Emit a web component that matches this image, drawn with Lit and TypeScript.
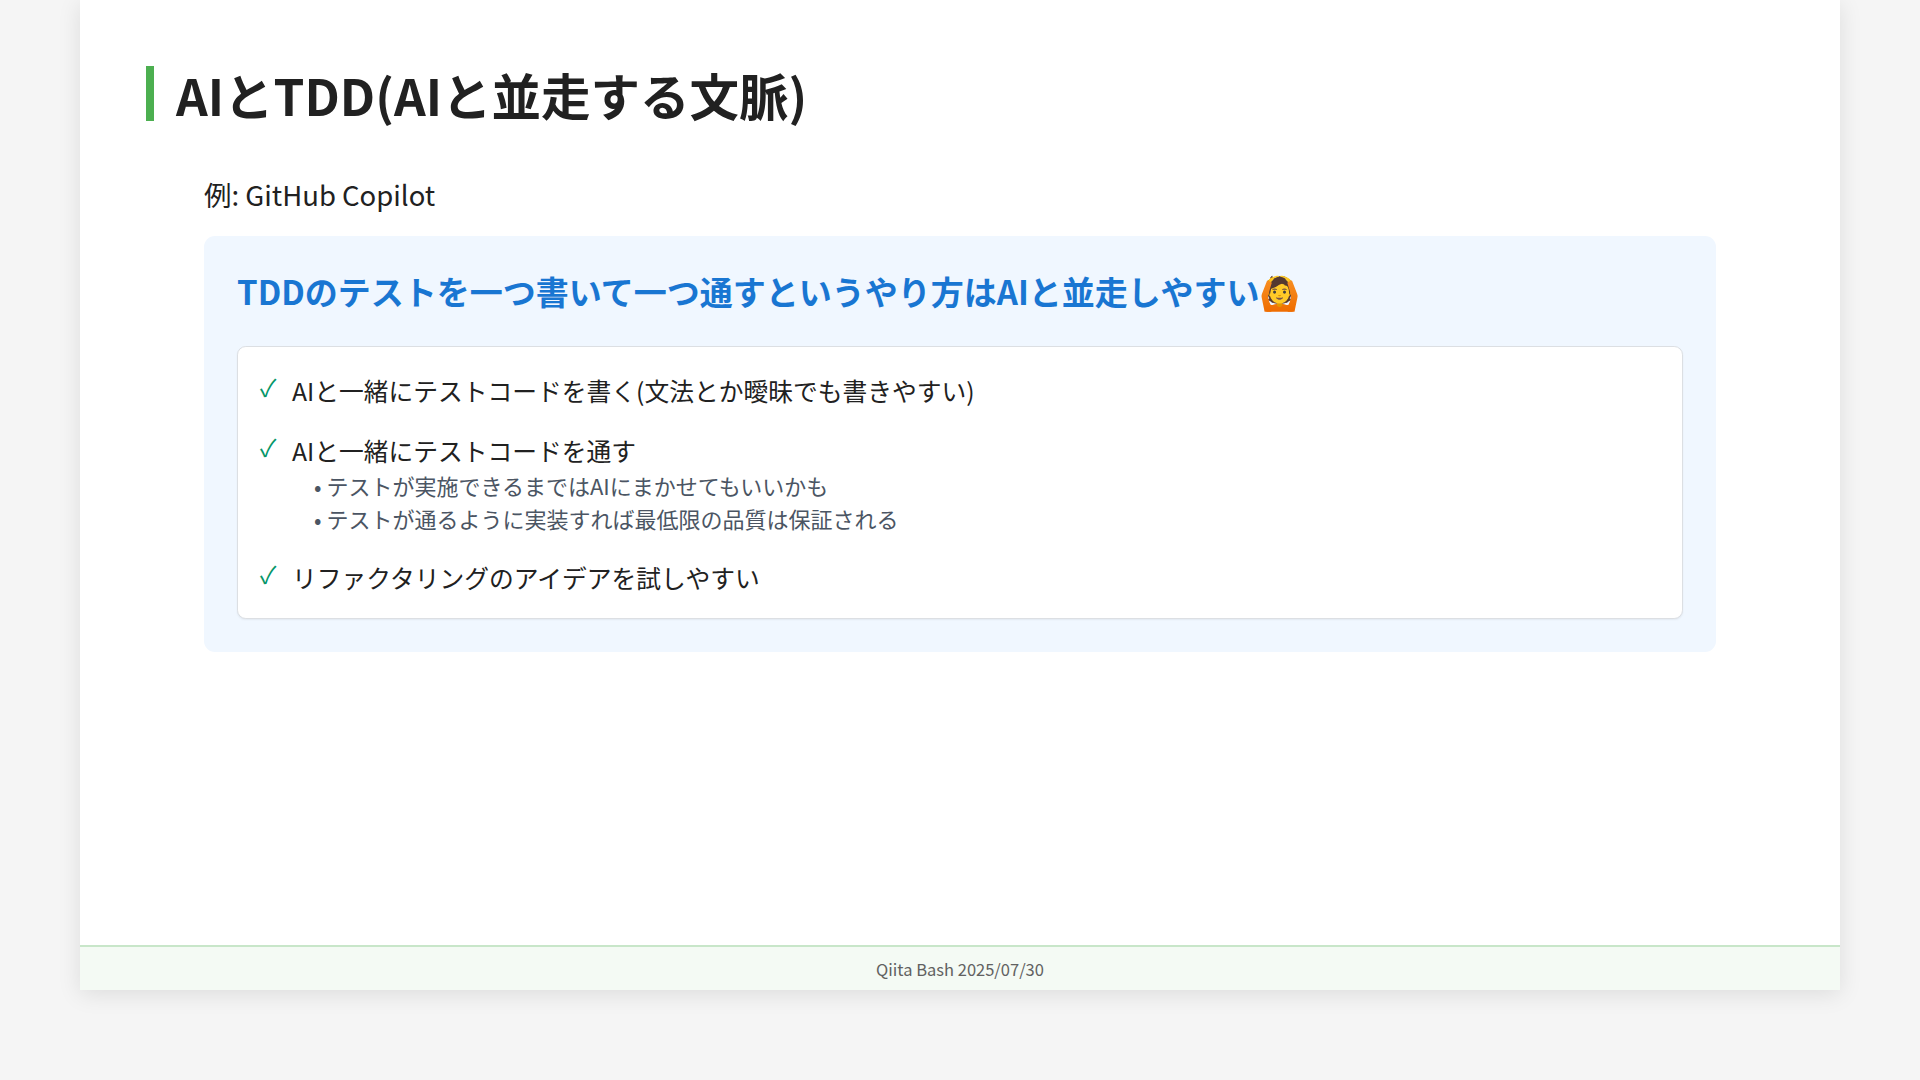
import { LitElement, html, css } from "lit";
import { customElement } from "lit/decorators.js";

@customElement("app-root")
export class AppRoot extends LitElement {
  static styles = css`
    :host { display: block; min-height: 1080px; background: #f5f5f5; font-family: "Noto Sans CJK JP", "Noto Sans", sans-serif; color: #212121; }
    .slide { width: 1760px; height: 990px; margin: 0 auto; background: #fff; box-shadow: 0 4px 22px rgba(0,0,0,.1); display: flex; flex-direction: column; }
    .main { flex: 1; padding: 66px 124px 0 66px; }
    h2 { margin: 0; padding: 2px 0 0 22px; font-size: 49.5px; line-height: 53px; font-weight: 700; border-left: 8.8px solid #4caf50; }
    .body { margin-left: 58px; }
    .lead { margin: 53px 0 0; font-size: 27.5px; line-height: 40px; }
    .card { margin-top: 22px; background: #f0f7ff; border-radius: 11px; padding: 33px; }
    h3 { margin: 0 0 33px; font-size: 33px; line-height: 44px; font-weight: 700; color: #1976d2; }
    .box { background: #fff; border: 1px solid #dcdfe3; border-radius: 8.8px; padding: 24px 21px 22px 20px; box-shadow: 0 1px 2px rgba(0,0,0,.06); }
    .item { display: flex; }
    .item + .item { margin-top: 22px; }
    .check { flex: none; width: 34px; padding-left: 2px; box-sizing: border-box; color: #059669; font-size: 24px; line-height: 32px; }
    .text { font-size: 24.75px; line-height: 38px; }
    ul { list-style: none; margin: 0; padding: 0 0 1px 22px; color: #4b5563; font-size: 22px; line-height: 33px; }
    footer { height: 45px; box-sizing: border-box; border-top: 2px solid #c8e6c9; background: #f4faf4; color: #616161; font-size: 16.5px; display: flex; align-items: center; justify-content: center; }
  `;

  render() {
    return html`
      <div class="slide">
        <div class="main">
          <h2>AIとTDD(AIと並走する文脈)</h2>
          <div class="body">
            <p class="lead">例: GitHub Copilot</p>
            <div class="card">
              <h3>TDDのテストを一つ書いて一つ通すというやり方はAIと並走しやすい🙆</h3>
              <div class="box">
                <div class="item"><span class="check">✓</span><div class="text">AIと一緒にテストコードを書く(文法とか曖昧でも書きやすい)</div></div>
                <div class="item"><span class="check">✓</span><div class="text">AIと一緒にテストコードを通す
                  <ul><li>• テストが実施できるまではAIにまかせてもいいかも</li><li>• テストが通るように実装すれば最低限の品質は保証される</li></ul></div></div>
                <div class="item"><span class="check">✓</span><div class="text">リファクタリングのアイデアを試しやすい</div></div>
              </div>
            </div>
          </div>
        </div>
        <footer>Qiita Bash 2025/07/30</footer>
      </div>
    `;
  }
}
